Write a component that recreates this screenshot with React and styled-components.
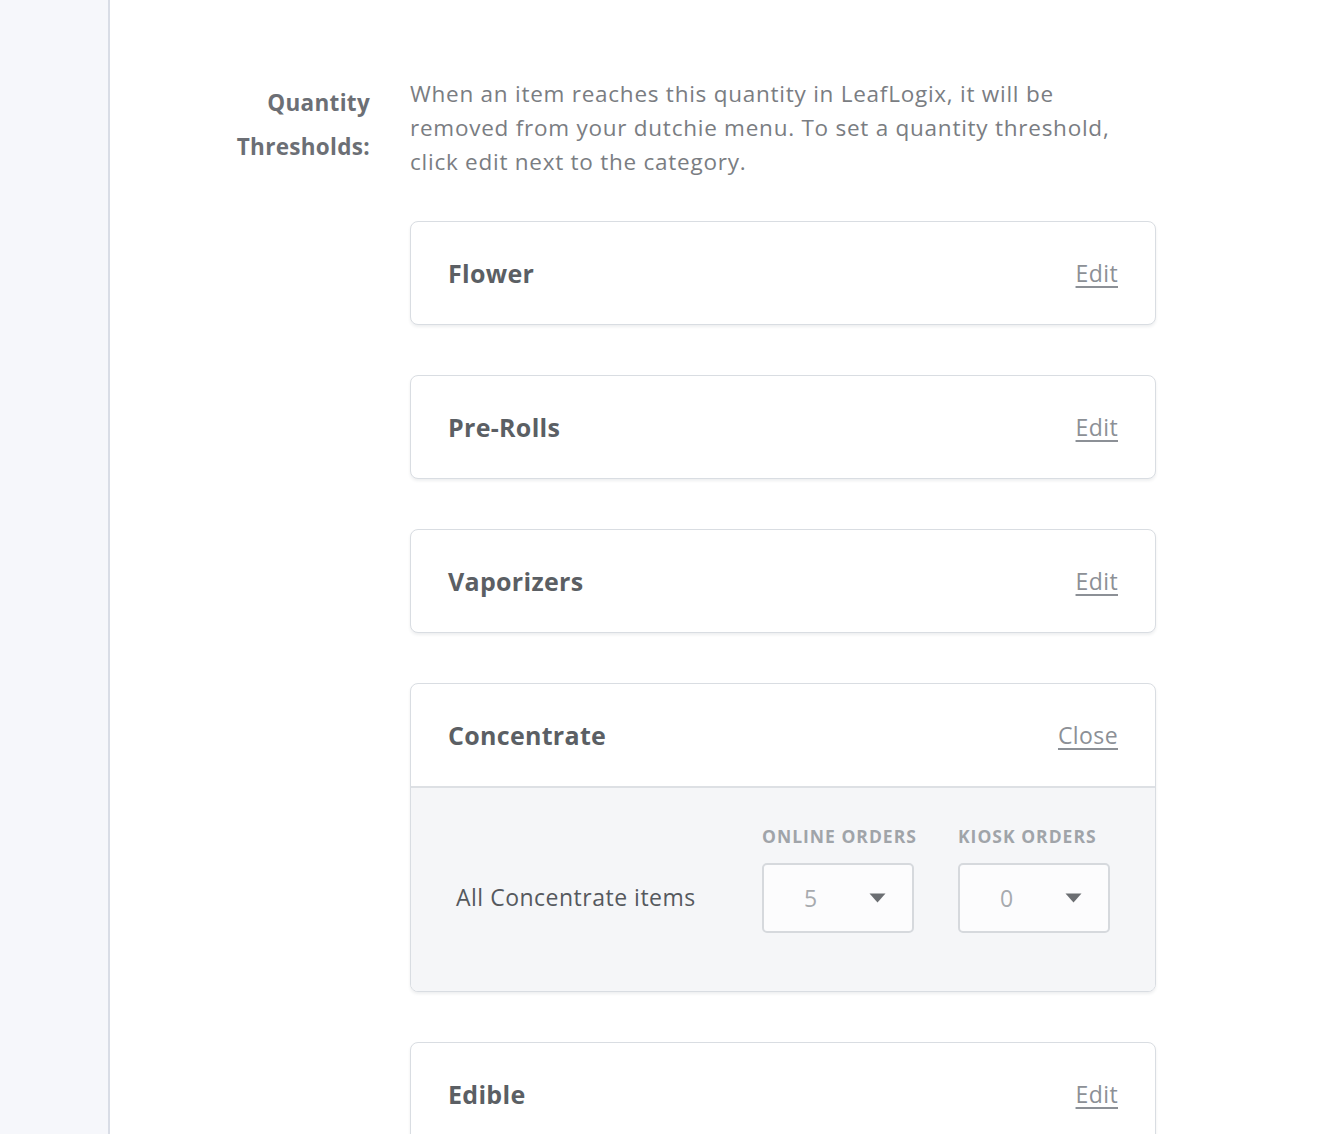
import React from 'react';
import styled, { createGlobalStyle } from 'styled-components';

const GlobalStyle = createGlobalStyle`
  html, body {
    margin: 0;
    padding: 0;
    background: #ffffff;
    font-family: "Open Sans", Lato, sans-serif;
  }
  * {
    box-sizing: border-box;
  }
`;

const categories = [
  { name: 'Flower' },
  { name: 'Pre-Rolls' },
  { name: 'Vaporizers' },
  { name: 'Concentrate', open: true, online: 5, kiosk: 0 },
  { name: 'Edible' },
];

const Caret = () => (
  <svg width="17" height="10" viewBox="0 0 17 10">
    <path d="M0.5 0.5h16L8.5 9.5z" fill="#6b6e72" />
  </svg>
);

const App = () => {
  return (
    <Page>
      <GlobalStyle />
      <Sidebar />
      <Main>
        <Section>
          <SectionLabel>
            Quantity
            <br />
            Thresholds:
          </SectionLabel>
          <SectionBody>
            <Description>
              When an item reaches this quantity in LeafLogix, it will be
              removed from your dutchie menu. To set a quantity threshold,
              click edit next to the category.
            </Description>
            <CardList>
              {categories.map((cat) => (
                <Card key={cat.name}>
                  <CardHeader>
                    <CardTitle>{cat.name}</CardTitle>
                    <ToggleLink href="#">{cat.open ? 'Close' : 'Edit'}</ToggleLink>
                  </CardHeader>
                  {cat.open && (
                    <CardBody>
                      <ItemName>All {cat.name} items</ItemName>
                      <Field>
                        <FieldLabel>Online Orders</FieldLabel>
                        <Select>
                          <SelectValue>{cat.online}</SelectValue>
                          <Caret />
                        </Select>
                      </Field>
                      <Field>
                        <FieldLabel>Kiosk Orders</FieldLabel>
                        <Select>
                          <SelectValue>{cat.kiosk}</SelectValue>
                          <Caret />
                        </Select>
                      </Field>
                    </CardBody>
                  )}
                </Card>
              ))}
            </CardList>
          </SectionBody>
        </Section>
      </Main>
    </Page>
  );
};

export default App;

const Page = styled.div`
  display: flex;
  height: 1134px;
  overflow: hidden;
`;

const Sidebar = styled.aside`
  flex: 0 0 110px;
  background: #f6f7fb;
  border-right: 2px solid #d9dde6;
`;

const Main = styled.main`
  flex: 1;
  background: #ffffff;
  padding-top: 77px;
`;

const Section = styled.section`
  display: flex;
  align-items: flex-start;
  gap: 40px;
`;

const SectionLabel = styled.div`
  width: 260px;
  text-align: right;
  font-weight: 700;
  font-size: 22.5px;
  letter-spacing: 0.3px;
  line-height: 44px;
  color: #6c6f75;
  margin-top: 4px;
`;

const SectionBody = styled.div`
  width: 746px;
`;

const Description = styled.p`
  margin: 0 0 42px;
  max-width: 712px;
  font-size: 22.5px;
  letter-spacing: 0.75px;
  line-height: 34px;
  color: #7a7d82;
`;

const CardList = styled.div`
  display: flex;
  flex-direction: column;
  gap: 50px;
`;

const Card = styled.div`
  border: 1px solid #d9dde2;
  border-radius: 8px;
  background: #ffffff;
  box-shadow: 0 2px 3px rgba(40, 50, 60, 0.08);
  overflow: hidden;
`;

const CardHeader = styled.div`
  height: 102px;
  display: flex;
  align-items: center;
  justify-content: space-between;
  padding: 0 37px;
`;

const CardTitle = styled.h3`
  margin: 0;
  font-size: 25px;
  letter-spacing: 0.3px;
  font-weight: 700;
  color: #5b5f64;
`;

const ToggleLink = styled.a`
  font-size: 23px;
  letter-spacing: 0.4px;
  color: #8c9096;
  text-decoration: underline;
  text-underline-offset: 4px;
`;

const CardBody = styled.div`
  display: flex;
  align-items: flex-end;
  background: #f5f6f8;
  border-top: 2px solid #dde0e4;
  padding: 36px 45px 58px 45px;
`;

const ItemName = styled.div`
  flex: 1;
  font-size: 23px;
  letter-spacing: 0.5px;
  color: #55595e;
  line-height: 72px;
`;

const Field = styled.div`
  width: 152px;
  display: flex;
  flex-direction: column;
  gap: 15px;
  & + & {
    margin-left: 44px;
  }
`;

const FieldLabel = styled.div`
  font-size: 17.5px;
  font-weight: 700;
  letter-spacing: 1px;
  text-transform: uppercase;
  color: #a0a4a9;
  white-space: nowrap;
`;

const Select = styled.div`
  width: 152px;
  height: 70px;
  background: #fcfcfd;
  border: 2px solid #d6d9dd;
  border-radius: 5px;
  display: flex;
  align-items: center;
  padding: 0 26px 0 40px;
  justify-content: space-between;
`;

const SelectValue = styled.span`
  font-size: 23px;
  color: #a7aaae;
`;
